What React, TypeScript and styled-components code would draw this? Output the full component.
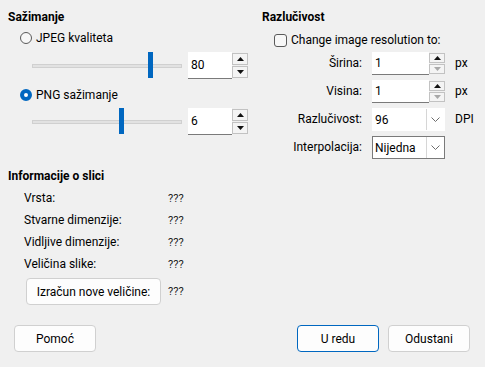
import React from 'react';
import styled, { createGlobalStyle } from 'styled-components';

const GlobalStyle = createGlobalStyle`
  html, body { margin: 0; padding: 0; background: #f0f0f0; }
  body {
    font-family: 'Segoe UI', Roboto, 'Liberation Sans', sans-serif;
    font-size: 12px;
    color: #000;
  }
`;

const Dialog = styled.div`
  width: 485px;
  height: 367px;
  box-sizing: border-box;
  padding: 9px 15px 0 8px;
  display: flex;
  flex-direction: column;
`;

const Top = styled.div`
  display: grid;
  grid-template-columns: 254px 1fr;
`;

const Section = styled.div`
  display: flex;
  flex-direction: column;
`;

const Heading = styled.div`
  font-weight: 700;
  line-height: 16px;
  height: 16px;
`;

const OptionRow = styled.label<{ $top: number }>`
  display: flex;
  align-items: center;
  gap: 4px;
  height: 16px;
  margin-top: ${(p) => p.$top}px;
  padding-left: 12px;
`;

const Radio = styled.span<{ $checked?: boolean }>`
  width: 12px;
  height: 12px;
  box-sizing: border-box;
  border-radius: 50%;
  border: ${(p) => (p.$checked ? '4px solid #0067c0' : '1px solid #5a5a5a')};
  background: ${(p) => (p.$checked ? '#fff' : '#f7f7f7')};
`;

const Check = styled.span`
  width: 13px;
  height: 13px;
  box-sizing: border-box;
  border-radius: 3px;
  border: 1px solid #5a5a5a;
  background: #f7f7f7;
`;

const SliderRow = styled.div<{ $top: number }>`
  display: flex;
  align-items: center;
  gap: 6px;
  height: 27px;
  margin-top: ${(p) => p.$top}px;
  padding-left: 24px;
`;

const Slider = styled.div`
  position: relative;
  width: 150px;
  height: 27px;
`;

const Track = styled.div`
  position: absolute;
  left: 0;
  right: 0;
  top: 12px;
  height: 4px;
  box-sizing: border-box;
  background: #e2e2e2;
  border: 1px solid #d0d0d0;
`;

const Thumb = styled.div`
  position: absolute;
  top: 0;
  width: 5px;
  height: 26px;
  background: #0067c0;
`;

const Spin = styled.div<{ $w: number; $h: number }>`
  display: flex;
  width: ${(p) => p.$w}px;
  height: ${(p) => p.$h}px;
`;

const SpinField = styled.div`
  flex: 1;
  background: #fff;
  border-bottom: 1px solid #7a7a7a;
  padding-left: 3px;
  display: flex;
  align-items: center;
`;

const SpinButtons = styled.div`
  width: 16px;
  display: flex;
  flex-direction: column;
  gap: 1px;
  padding: 1px 0;
  box-sizing: border-box;
`;

const SpinBtn = styled.div`
  flex: 1;
  background: #f4f4f4;
  border: 1px solid #c2c2c2;
  display: flex;
  align-items: center;
  justify-content: center;
`;

const Combo = styled.div<{ $framed?: boolean }>`
  display: flex;
  height: 23px;
  box-sizing: border-box;
  background: #fff;
  border: 1px solid ${(p) => (p.$framed ? '#7a7a7a' : 'transparent')};
`;

const ComboText = styled.div`
  flex: 1;
  display: flex;
  align-items: center;
  padding-left: 2px;
`;

const ComboButton = styled.div`
  width: 17px;
  border-left: 1px solid #d6d6d6;
  display: flex;
  align-items: center;
  justify-content: center;
`;

const FieldGrid = styled.div`
  display: grid;
  grid-template-columns: 72px 73px auto;
  grid-auto-rows: 23px;
  column-gap: 10px;
  row-gap: 5px;
  margin-top: 4px;
  margin-left: 28px;
`;

const FieldLabel = styled.div`
  text-align: right;
  line-height: 23px;
  white-space: nowrap;
`;

const Unit = styled.div`
  line-height: 23px;
`;

const InfoSection = styled.div`
  margin-top: 9px;
  display: flex;
  flex-direction: column;
`;

const InfoGrid = styled.div`
  display: grid;
  grid-template-columns: 144px auto;
  grid-auto-rows: 22px;
  padding-left: 16px;
  margin-top: 3px;
  align-items: center;
`;

const Value = styled.div`
  color: #222;
  font-size: 11px;
`;

const ButtonRow = styled.div`
  display: grid;
  grid-template-columns: 144px auto;
  padding-left: 16px;
  margin-top: 3px;
  align-items: center;
`;

const Button = styled.button<{ $w: number; $primary?: boolean }>`
  width: ${(p) => p.$w}px;
  height: 27px;
  padding: 0;
  font: inherit;
  color: #000;
  background: #fdfdfd;
  border: 1px solid ${(p) => (p.$primary ? '#0067c0' : '#d0d0d0')};
  border-radius: 4px;
`;

const CalcButton = styled(Button)`
  margin-left: 2px;
`;

const Footer = styled.div`
  margin-top: 20px;
  display: flex;
  align-items: center;
  padding-left: 6px;
`;

const Spacer = styled.div`
  flex: 1;
`;

const RightButtons = styled.div`
  display: flex;
  gap: 9px;
`;

function Arrow({ down, disabled }: { down?: boolean; disabled?: boolean }) {
  return (
    <svg width="7" height="4" viewBox="0 0 7 4">
      <path d={down ? 'M0 0H7L3.5 4Z' : 'M0 4H7L3.5 0Z'} fill={disabled ? '#a8a8a8' : '#111'} />
    </svg>
  );
}

function Chevron() {
  return (
    <svg width="9" height="5" viewBox="0 0 9 5">
      <polyline points="0.5,0.5 4.5,4.5 8.5,0.5" fill="none" stroke="#6d6d6d" strokeWidth="1" />
    </svg>
  );
}

function SpinBox({ value, w, h, downDisabled }: { value: string; w: number; h: number; downDisabled?: boolean }) {
  return (
    <Spin $w={w} $h={h}>
      <SpinField>{value}</SpinField>
      <SpinButtons>
        <SpinBtn><Arrow /></SpinBtn>
        <SpinBtn><Arrow down disabled={downDisabled} /></SpinBtn>
      </SpinButtons>
    </Spin>
  );
}

function SliderSpin({ top, value, min, max }: { top: number; value: number; min: number; max: number }) {
  const left = ((value - min) / (max - min)) * 145;
  return (
    <SliderRow $top={top}>
      <Slider>
        <Track />
        <Thumb style={{ left }} />
      </Slider>
      <SpinBox value={String(value)} w={60} h={27} />
    </SliderRow>
  );
}

function ComboBox({ value, framed }: { value: string; framed?: boolean }) {
  return (
    <Combo $framed={framed}>
      <ComboText>{value}</ComboText>
      <ComboButton><Chevron /></ComboButton>
    </Combo>
  );
}

const info = [
  ['Vrsta:', '???'],
  ['Stvarne dimenzije:', '???'],
  ['Vidljive dimenzije:', '???'],
  ['Veličina slike:', '???'],
];

export default function App() {
  return (
    <>
      <GlobalStyle />
      <Dialog>
        <Top>
          <Section>
            <Heading>Sažimanje</Heading>
            <OptionRow $top={5}><Radio />JPEG kvaliteta</OptionRow>
            <SliderSpin top={6} value={80} min={1} max={100} />
            <OptionRow $top={8}><Radio $checked />PNG sažimanje</OptionRow>
            <SliderSpin top={5} value={6} min={0} max={10} />
          </Section>
          <Section>
            <Heading>Razlučivost</Heading>
            <OptionRow $top={7}><Check />Change image resolution to:</OptionRow>
            <FieldGrid>
              <FieldLabel>Širina:</FieldLabel>
              <SpinBox value="1" w={73} h={23} downDisabled />
              <Unit>px</Unit>
              <FieldLabel>Visina:</FieldLabel>
              <SpinBox value="1" w={73} h={23} downDisabled />
              <Unit>px</Unit>
              <FieldLabel>Razlučivost:</FieldLabel>
              <ComboBox value="96" />
              <Unit>DPI</Unit>
              <FieldLabel>Interpolacija:</FieldLabel>
              <ComboBox value="Nijedna" framed />
            </FieldGrid>
          </Section>
        </Top>
        <InfoSection>
          <Heading>Informacije o slici</Heading>
          <InfoGrid>
            {info.map(([label, value]) => (
              <React.Fragment key={label}>
                <div>{label}</div>
                <Value>{value}</Value>
              </React.Fragment>
            ))}
          </InfoGrid>
          <ButtonRow>
            <CalcButton $w={135}>Izračun nove veličine:</CalcButton>
            <Value>???</Value>
          </ButtonRow>
        </InfoSection>
        <Footer>
          <Button $w={82}>Pomoć</Button>
          <Spacer />
          <RightButtons>
            <Button $w={82} $primary>U redu</Button>
            <Button $w={82}>Odustani</Button>
          </RightButtons>
        </Footer>
      </Dialog>
    </>
  );
}
